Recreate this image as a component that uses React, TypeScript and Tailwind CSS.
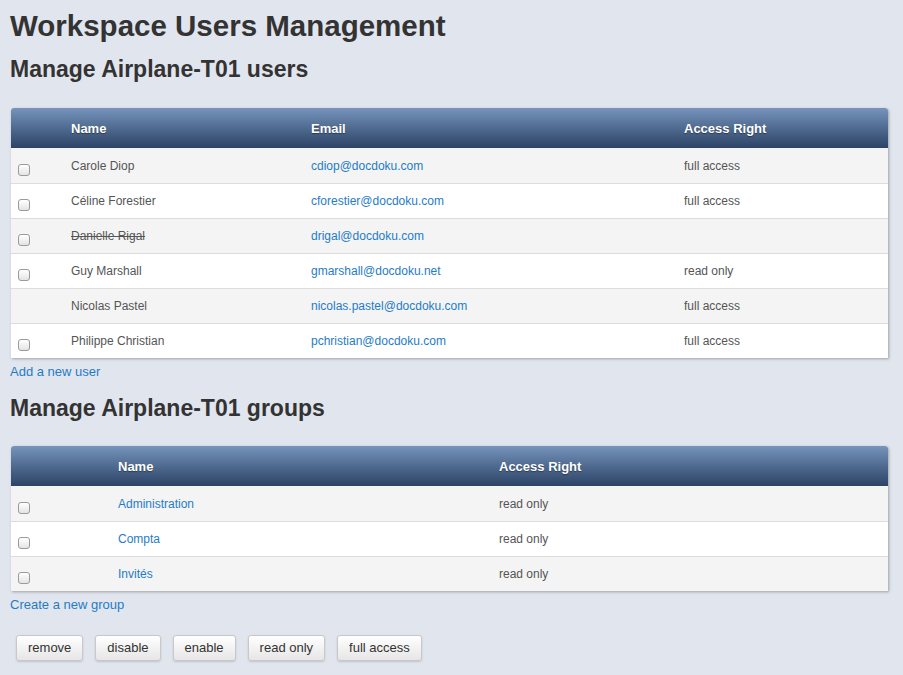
const users = [
  { name: 'Carole Diop', email: 'cdiop@docdoku.com', access: 'full access', check: true },
  { name: 'Céline Forestier', email: 'cforestier@docdoku.com', access: 'full access', check: true },
  { name: 'Danielle Rigal', email: 'drigal@docdoku.com', access: '', check: true, disabled: true },
  { name: 'Guy Marshall', email: 'gmarshall@docdoku.net', access: 'read only', check: true },
  { name: 'Nicolas Pastel', email: 'nicolas.pastel@docdoku.com', access: 'full access', check: false },
  { name: 'Philippe Christian', email: 'pchristian@docdoku.com', access: 'full access', check: true },
];

const groups = [
  { name: 'Administration', access: 'read only' },
  { name: 'Compta', access: 'read only' },
  { name: 'Invités', access: 'read only' },
];

function Checkbox() {
  return (
    <div className="w-[12px] h-[12px] rounded-[3px] border border-[#9a9a9a] bg-gradient-to-b from-white to-[#e4e4e4] shadow-[inset_0_1px_0_rgba(255,255,255,0.8)]" />
  );
}

function HeaderRow({ cols }: { cols: { label: string; w: string }[] }) {
  return (
    <div className="flex h-[40px] items-center rounded-t-[3px] bg-gradient-to-b from-[#7694bc] to-[#2c4466] pt-[1px] text-[13px] font-bold text-white [text-shadow:0_1px_1px_rgba(0,0,0,0.4)]">
      {cols.map((c, i) => (
        <div key={i} className={`${c.w} shrink-0`}>
          {c.label}
        </div>
      ))}
    </div>
  );
}

export default function App() {
  return (
    <div className="min-h-[675px] bg-[#e1e5ee] px-[10px] pb-[20px] font-['Liberation_Sans',Arial,sans-serif] text-[#333]">
      <h1 className="pt-[9px] text-[29.5px] font-bold leading-[34px] text-[#333]">Workspace Users Management</h1>
      <h2 className="mt-[13px] text-[23px] font-bold leading-[26px] text-[#333]">Manage Airplane-T01 users</h2>

      <div className="mt-[26px] ml-[1px] w-[877px] rounded-t-[3px] bg-white shadow-[1px_1px_3px_rgba(0,0,0,0.3)]">
        <HeaderRow
          cols={[
            { label: '', w: 'w-[60px]' },
            { label: 'Name', w: 'w-[240px]' },
            { label: 'Email', w: 'w-[373px]' },
            { label: 'Access Right', w: 'w-[204px]' },
          ]}
        />
        {users.map((u, i) => (
          <div
            key={u.email}
            className={`flex h-[35px] items-center text-[12px] ${i % 2 === 0 ? 'bg-[#f4f4f4]' : 'bg-white'} ${i > 0 ? 'border-t border-[#dcdcdc]' : ''}`}
          >
            <div className="flex w-[60px] shrink-0 pl-[7px] pt-[8px]">{u.check && <Checkbox />}</div>
            <div className={`w-[240px] shrink-0 text-[#555] ${u.disabled ? 'line-through' : ''}`}>{u.name}</div>
            <div className="w-[373px] shrink-0 text-[#1f7cc7]">{u.email}</div>
            <div className="w-[204px] shrink-0 text-[#555]">{u.access}</div>
          </div>
        ))}
      </div>
      <div className="mt-[6px] text-[13px] leading-[16px] text-[#1f7cc7]">Add a new user</div>

      <h2 className="mt-[15px] text-[23px] font-bold leading-[26px] text-[#333]">Manage Airplane-T01 groups</h2>

      <div className="mt-[25px] ml-[1px] w-[877px] rounded-t-[3px] bg-white shadow-[1px_1px_3px_rgba(0,0,0,0.3)]">
        <HeaderRow
          cols={[
            { label: '', w: 'w-[107px]' },
            { label: 'Name', w: 'w-[381px]' },
            { label: 'Access Right', w: 'w-[389px]' },
          ]}
        />
        {groups.map((g, i) => (
          <div
            key={g.name}
            className={`flex h-[35px] items-center text-[12px] ${i % 2 === 0 ? 'bg-[#f4f4f4]' : 'bg-white'} ${i > 0 ? 'border-t border-[#dcdcdc]' : ''}`}
          >
            <div className="flex w-[107px] shrink-0 pl-[7px] pt-[8px]">
              <Checkbox />
            </div>
            <div className="w-[381px] shrink-0 text-[#1f7cc7]">{g.name}</div>
            <div className="w-[389px] shrink-0 text-[#555]">{g.access}</div>
          </div>
        ))}
      </div>
      <div className="mt-[6px] text-[13px] leading-[16px] text-[#1f7cc7]">Create a new group</div>

      <div className="mt-[22px] ml-[6px] flex gap-[12px]">
        {['remove', 'disable', 'enable', 'read only', 'full access'].map((b) => (
          <button
            key={b}
            className="h-[26px] rounded-[3px] border border-[#c8c8c8] bg-gradient-to-b from-white to-[#e6e6e6] px-[11px] text-[13px] text-[#333] shadow-[0_1px_2px_rgba(0,0,0,0.15)]"
          >
            {b}
          </button>
        ))}
      </div>
    </div>
  );
}
